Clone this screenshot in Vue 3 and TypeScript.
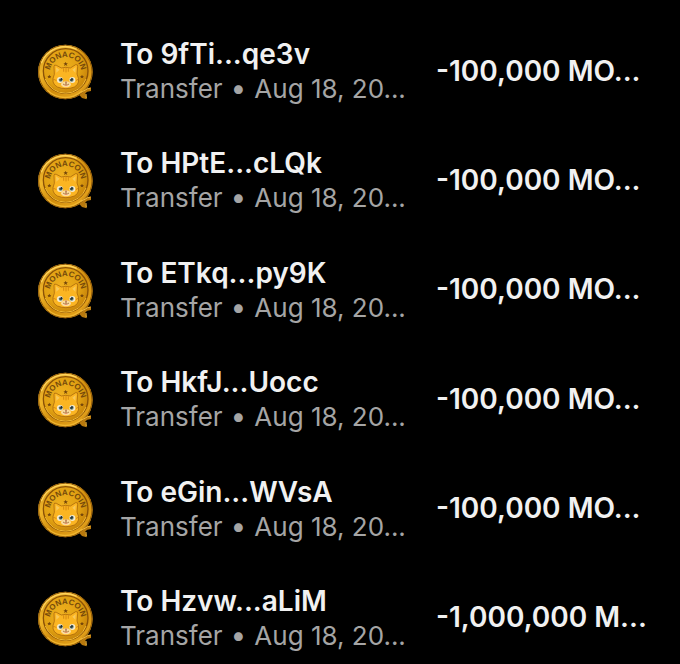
<script setup lang="ts">
interface Transfer {
  recipient: string
  date: string
  amount: string
}

const date = 'Aug 18, 20...'

const transfers: Transfer[] = [
  { recipient: 'To 9fTi...qe3v', date, amount: '-100,000 MO...' },
  { recipient: 'To HPtE...cLQk', date, amount: '-100,000 MO...' },
  { recipient: 'To ETkq...py9K', date, amount: '-100,000 MO...' },
  { recipient: 'To HkfJ...Uocc', date, amount: '-100,000 MO...' },
  { recipient: 'To eGin...WVsA', date, amount: '-100,000 MO...' },
  { recipient: 'To Hzvw...aLiM', date, amount: '-1,000,000 M...' },
]
</script>

<template>
  <main class="history">
    <svg class="defs" width="0" height="0" aria-hidden="true">
      <defs>
        <linearGradient id="rim" x1="0" y1="0" x2="1" y2="1">
          <stop offset="0" stop-color="#c88a12" />
          <stop offset="0.3" stop-color="#f0b62a" />
          <stop offset="0.55" stop-color="#d18c0c" />
          <stop offset="0.8" stop-color="#e2a01a" />
          <stop offset="1" stop-color="#875005" />
        </linearGradient>
        <radialGradient id="face" cx="0.4" cy="0.4" r="0.7">
          <stop offset="0" stop-color="#efb01f" />
          <stop offset="0.6" stop-color="#e0a012" />
          <stop offset="1" stop-color="#c07c08" />
        </radialGradient>
        <path id="arc" d="M60 108 A47 47 0 0 1 154 108" />
        <symbol id="coin" viewBox="24 16 168 174">
          <path d="M140 166 L174 154 L183 152 L183 163 L172 165 L166 170 L170 188 L156 184 Z" fill="#b8790d" />
          <circle cx="106" cy="106" r="82" fill="url(#rim)" />
          <circle cx="106" cy="106" r="80" fill="none" stroke="#8f590a" stroke-width="3" />
          <path d="M34 80 A76 76 0 0 1 140 38" fill="none" stroke="#ffd35c" stroke-width="4" />
          <path d="M52 161 A76 76 0 0 0 156 163" fill="none" stroke="#f0b62f" stroke-width="4" />
          <path d="M154 167 L173 156 L181 156 M168 172 L169 185" stroke="#f0b93e" stroke-width="3" fill="none" />
          <circle cx="107" cy="103" r="67" fill="url(#face)" stroke="#8b5206" stroke-width="4" />
          <path d="M46 127 A65 65 0 0 0 168 127" fill="none" stroke="#f3bb35" stroke-width="3" />
          <text class="coin-name"><textPath href="#arc" startOffset="50%" text-anchor="middle">MONACOIN</textPath></text>
          <path d="M107 75 l2 5 h5 l-4 3 2 5 -5 -3 -5 3 2 -5 -4 -3 h5 Z M58 114 l2 4 h4 l-3 3 1 4 -4 -2 -4 2 1 -4 -3 -3 h4 Z M156 114 l2 4 h4 l-3 3 1 4 -4 -2 -4 2 1 -4 -3 -3 h4 Z" fill="#75460a" />
          <path d="M72 90 Q72 83 79 86 L94 94 Q107 90 121 94 L137 84 Q144 82 143 90 L141 112 Q154 140 133 151 Q108 161 82 151 Q61 140 73 113 Z" fill="#fbb522" stroke="#9c5b08" stroke-width="2" />
          <path d="M78 92 L89 99 L79 108 Z M137 91 L127 99 L136 108 Z" fill="#f8c95a" />
          <path d="M101 96 V104 M108 94 V106 M115 96 V104 M71 128 L78 131 M146 127 L139 131" stroke="#c4740b" stroke-width="2" stroke-linecap="round" />
          <ellipse cx="108" cy="143" rx="15" ry="9" fill="#fbdc9c" />
          <circle cx="90" cy="130" r="9" fill="#f7ecd0" />
          <circle cx="127" cy="130" r="9" fill="#f7ecd0" />
          <circle cx="92" cy="129" r="6" fill="#5d7d76" />
          <circle cx="125" cy="129" r="6" fill="#5d7d76" />
          <circle cx="93" cy="128" r="4" fill="#232b29" />
          <circle cx="124" cy="128" r="4" fill="#232b29" />
          <circle cx="90" cy="126" r="2" fill="#fff" />
          <circle cx="122" cy="126" r="2" fill="#fff" />
          <path d="M104 135 H112 L108 139 Z" fill="#9d4329" />
          <path d="M108 139 V142 Q103 147 99 142 M108 142 Q113 147 117 142" fill="none" stroke="#8a4b22" stroke-width="2" />
          <path d="M105 145 Q108 151 111 145 Z" fill="#dd6250" />
        </symbol>
      </defs>
    </svg>

    <ul class="list">
      <li v-for="item in transfers" :key="item.recipient" class="row">
        <svg class="coin" role="img" aria-label="Monacoin"><use href="#coin" /></svg>
        <div class="info">
          <p class="recipient">{{ item.recipient }}</p>
          <p class="detail">
            <span>Transfer</span>
            <span class="bullet">•</span>
            <span>{{ item.date }}</span>
          </p>
        </div>
        <p class="amount">{{ item.amount }}</p>
      </li>
    </ul>
  </main>
</template>

<style>
body {
  margin: 0;
  background: #000;
}
</style>

<style scoped>
.history {
  font-family: Inter, "Liberation Sans", sans-serif;
  background: #000;
  color: #f1f1f1;
}

.defs {
  position: absolute;
}

.list {
  display: flex;
  flex-direction: column;
  justify-content: space-between;
  box-sizing: border-box;
  min-height: 100vh;
  margin: 0;
  padding: 37px 35px 12px 38px;
  list-style: none;
}

.row {
  display: flex;
  align-items: center;
}

.coin {
  flex: none;
  width: 56px;
  height: 58px;
  margin-right: 26px;
}

.coin-name {
  font-family: "Liberation Sans", sans-serif;
  font-size: 24px;
  font-weight: 700;
  fill: #74490b;
}

.info {
  flex: 1;
  min-width: 0;
}

.recipient,
.detail,
.amount {
  margin: 0;
  font-size: 28px;
  line-height: 35px;
  white-space: nowrap;
}

.recipient,
.amount {
  font-weight: 600;
}

.detail {
  display: flex;
  gap: 8px;
  font-size: 26px;
  line-height: 33px;
  color: #a5a5a5;
}

.bullet {
  font-size: 28px;
}

.amount {
  flex: none;
  width: 209px;
}
</style>
